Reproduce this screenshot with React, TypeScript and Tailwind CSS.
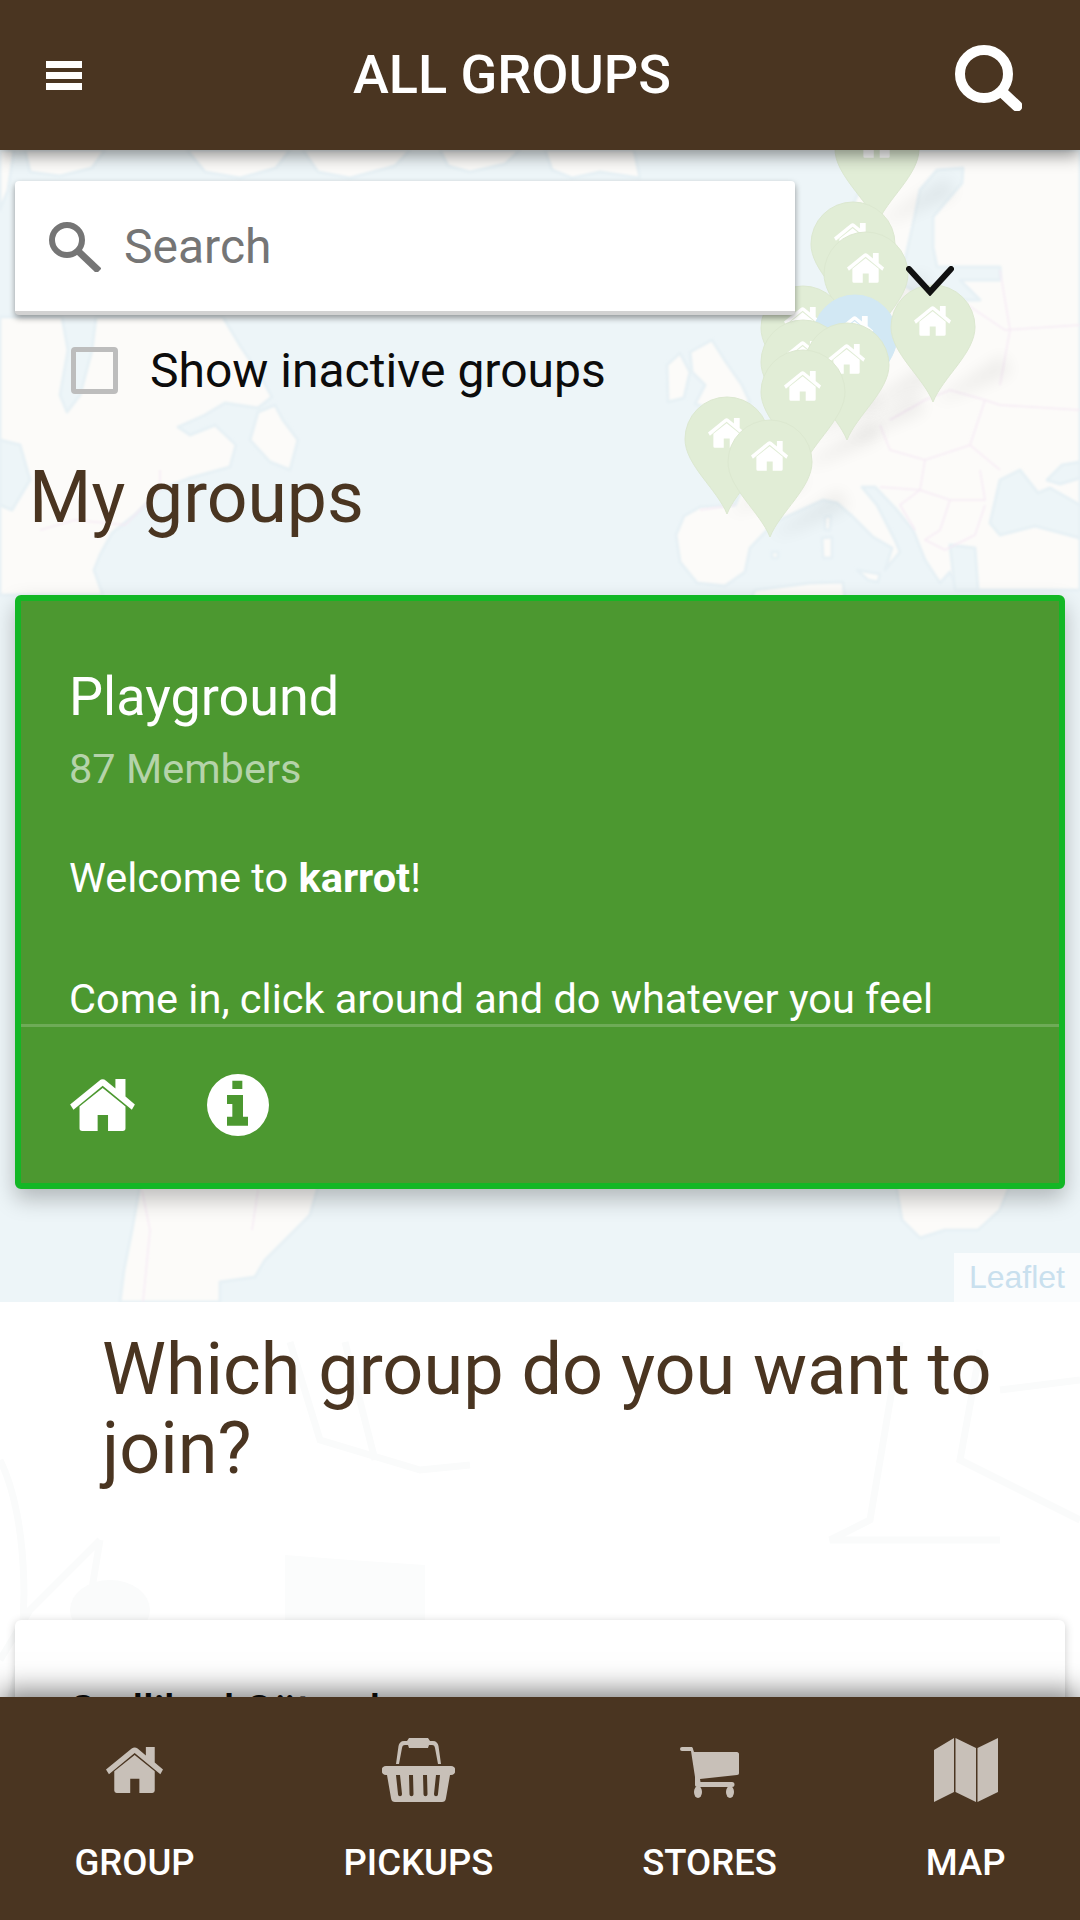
const font = "font-['Roboto',sans-serif]";

// FA4 style glyphs, drawn by hand since the icon packages only ship the newer shapes
function HomeIcon({ className }: { className?: string }) {
  return (
    <svg viewBox="0 0 193 155" className={className} fill="currentColor">
      <path d="M97 27 165 82V147a8 8 0 0 1-8 8H113V107H82V155H36a8 8 0 0 1-8-8V82Z" />
      <path d="M0 76 10 92 97 20 184 92 193 76 165 52V0H135V28L107 5Q97-3 87 5Z" />
    </svg>
  );
}

function InfoIcon({ className }: { className?: string }) {
  return (
    <svg viewBox="0 0 186 186" className={className} fill="currentColor">
      <path
        fillRule="evenodd"
        d="M93 0a93 93 0 1 0 0 186A93 93 0 1 0 93 0ZM76 20h30V45H76ZM60 63h48v65h15v27H60V128H76V90H60Z"
      />
    </svg>
  );
}

function BasketIcon({ className }: { className?: string }) {
  return (
    <svg viewBox="0 0 73 64" className={className} fill="currentColor">
      <path d="M27 0h19l2 3h3c3 0 5 2 5.500 5L59 26h-3L53 10c-.4-2-1-3-3-3h-3l-1 3H27l-1-3h-3c-2 0-2.600 1-3 3l-3 16h-3l2.500-18C17 5 19 3 22 3h3Z" />
      <path
        fillRule="evenodd"
        d="M4 28h65a4 4 0 0 1 0 9H68L64 60c-.4 3-2 4-4 4H13c-2 0-3.600-1-4-4L5 37H4a4 4 0 0 1 0-9ZM14 37l2 19c0 3 4 3 4 0L18 37ZM27 37l.5 19c0 3 4 3 4 0L31 37ZM41 37l.5 19c0 3 4 3 4 0L45 37ZM54 37l-2 19c0 3 4 3 4 0L58 37Z"
      />
    </svg>
  );
}

function CartIcon({ className }: { className?: string }) {
  return (
    <svg viewBox="0 0 59 51" className={className} fill="currentColor">
      <path d="M2 0h9c1 0 2 .5 2 2l1 3h43c1 0 2 1 2 2V26c0 1-.5 2-2 2L20 32l.5 3H52a2.500 2.500 0 0 1 0 5H17c-1 0-2-1-2-2V30L11 4H2a2 2 0 0 1 0-4Z" />
      <ellipse cx="18" cy="45" rx="4" ry="6" />
      <ellipse cx="50" cy="45" rx="4" ry="6" />
    </svg>
  );
}

function MapIcon({ className }: { className?: string }) {
  return (
    <svg viewBox="0 0 64 64" className={className} fill="currentColor">
      <path d="M20 0V54L0 64V12ZM21.500 0 42 10V64L21.500 54ZM64 0V54L43.500 64V10Z" />
    </svg>
  );
}

function Marker({ cx, top, blue }: { cx: number; top: number; blue?: boolean }) {
  return (
    <g transform={`translate(${cx - 42} ${top})`}>
      <path
        d="M42 117C32 92 0 68 0 42A42 42 0 0 1 84 42C84 68 52 92 42 117Z"
        fill={blue ? "#d2e8f4" : "#e1edd6"}
        stroke={blue ? "#d2e8f4" : "#dce8d0"}
      />
      <g transform="translate(23 21) scale(0.192)" fill="#fff">
        <path d="M97 27 165 82V147a8 8 0 0 1-8 8H113V107H82V155H36a8 8 0 0 1-8-8V82Z" />
        <path d="M0 76 10 92 97 20 184 92 193 76 165 52V0H135V28L107 5Q97-3 87 5Z" />
      </g>
    </g>
  );
}

const markers = [
  { cx: 877, top: 107 },
  { cx: 853, top: 202 },
  { cx: 866, top: 232 },
  { cx: 803, top: 286 },
  { cx: 855, top: 295, blue: true },
  { cx: 803, top: 320 },
  { cx: 847, top: 323 },
  { cx: 803, top: 350 },
  { cx: 727, top: 397 },
  { cx: 770, top: 420 },
  { cx: 933, top: 285 },
];

// the tile layer, viewBox keeps screen coordinates
function WorldMap() {
  return (
    <svg viewBox="0 150 1080 1152" className="absolute inset-0 h-full w-full">
      <defs>
        <filter id="soft" x="-50%" y="-50%" width="200%" height="200%">
          <feGaussianBlur stdDeviation="8" />
        </filter>
        <filter id="edge">
          <feGaussianBlur stdDeviation="1.2" />
        </filter>
      </defs>
      <rect x="0" y="150" width="1080" height="1152" fill="#edf5f8" />
      <g fill="#fcfbf9" stroke="#e7f1f5" strokeWidth="3" strokeLinejoin="round" filter="url(#edge)">
        {/* arctic islands along the header */}
        <path d="M0 150H14L8 190 0 210ZM25 150H105L92 168 60 176 30 172ZM187 150H290L276 168 240 178 205 172ZM303 150H410L395 166 350 178 318 172ZM440 150H520L505 164 470 172 448 166ZM545 150H634L640 178 600 172 572 178 552 170Z" />
        {/* canada and the us */}
        <path d="M0 317H62L68 350 60 395 67 412 80 395 92 350 96 317H223L241 347 260 375 272 397 258 408 225 403 205 415 178 427 190 435 215 425 236 445 230 467 190 478 160 490 135 515 112 533 100 555 94 570 103 595H0Z" />
        <path d="M258 412 275 405 283 420 298 440 290 470 270 462 250 440Z" />
        {/* uk and ireland */}
        <path d="M690 352 712 340 726 362 742 385 750 402 720 412 695 404 705 385 692 372Z" />
        <path d="M667 365 680 353 690 372 684 398 668 402Z" />
        {/* eurasia */}
        <path d="M684 516 700 507 735 505 750 470 760 440 790 420 830 400 860 350 870 300 845 250 855 200 880 150H1080V590H975L960 590 950 572 940 583 925 560 913 530 895 508 875 487 862 487 877 505 895 540 900 552 885 570 892 548 873 537 853 517 837 503 823 500 775 522 750 548 745 572 725 586 697 583 680 562 676 535Z" />
        {/* south america and africa, under the card */}
        <path d="M141 1180H320L310 1215 290 1235 265 1260 255 1277 220 1282V1302H120L124 1270 132 1230Z" />
        <path d="M895 1180H1012L1000 1210 978 1230 945 1230 920 1238 902 1220Z" />
        {/* mediterranean islands and the north african coast */}
        <path d="M825 517 831 516 830 530 825 530ZM822 538 832 537 832 558 823 558ZM857 570 880 574 878 582 868 580ZM772 552 778 552 778 558 772 558Z" />
        <path d="M750 600 755 590 810 583 843 582 845 600Z" />
      </g>
      <g fill="#edf5f8" stroke="#e7f1f5" strokeWidth="3" strokeLinejoin="round" filter="url(#edge)">
        {/* baltic */}
        <path d="M900 283 915 215 920 190 937 170 963 168 962 183 933 217 933 247 937 267 1000 267 1000 280 960 280 980 300 930 300Z" />
        {/* black sea */}
        <path d="M990 523 1000 480 1020 470 1038 493 1050 488 1080 505V538L1035 526 1000 535Z" />
        <path d="M1047 480 1062 465 1080 462V478L1060 484Z" />
        {/* aegean */}
        <path d="M950 545 975 548 978 590 955 590Z" />
        {/* great lakes */}
        <path d="M0 440 20 445 30 480 12 510 0 505Z" />
      </g>
      <g fill="none" stroke="#f6ebf5" strokeWidth="1.500" filter="url(#edge)">
        <path d="M880 425 890 450 925 460 970 445 1000 470M970 445 985 400 1000 405 1080 410M985 400 950 390 925 400 890 420M925 460 920 490 880 487M920 490 950 500 985 500 980 470M920 490 900 505 915 530M950 500 940 530 925 540 945 550 975 535 985 505" />
        <path d="M1000 270 1010 330 1000 385M960 300 1005 330 1080 325" />
        <path d="M40 530 75 520 125 525 160 490 160 470M700 510 735 505" />
        <path d="M142 1190 150 1230 143 1302M258 1190 252 1230" />
      </g>
      {markers.map((m) => (
        <path
          key={`s${m.cx}-${m.top}`}
          d={`M${m.cx} ${m.top + 117}L${m.cx + 70} ${m.top + 70} ${m.cx + 78} ${m.top + 88} ${m.cx + 20} ${m.top + 112}Z`}
          fill="#000"
          opacity="0.06"
          filter="url(#soft)"
        />
      ))}
      {markers.map((m) => (
        <Marker key={`${m.cx}-${m.top}`} {...m} />
      ))}
    </svg>
  );
}

// faint hand drawn people behind the join list
function Doodles() {
  return (
    <svg viewBox="0 1302 1080 420" className="absolute inset-0 h-full w-full" fill="none" stroke="#fafbfb" strokeWidth="7">
      <path d="M290 1302 320 1400 420 1430 470 1425M345 1302 375 1420M900 1302 870 1480 830 1500H1000M980 1310 960 1420 1080 1480M1080 1340 1000 1350" />
      <path d="M100 1500 30 1570 0 1620M100 1500 90 1560" />
      <ellipse cx="110" cy="1570" rx="40" ry="30" fill="#fafbfb" stroke="none" />
      <path d="M285 1515 350 1520 425 1525V1620H285Z" fill="#fbfcfc" stroke="none" />
      <path d="M0 1420C30 1480 30 1600 10 1660" />
    </svg>
  );
}

const tabs = [
  { label: "GROUP", icon: <HomeIcon className="mt-[9px] h-[46px] w-[57px]" /> },
  { label: "PICKUPS", icon: <BasketIcon className="h-[64px] w-[73px]" /> },
  { label: "STORES", icon: <CartIcon className="mt-[9px] h-[51px] w-[59px]" /> },
  { label: "MAP", icon: <MapIcon className="h-[64px] w-[64px]" /> },
];

export default function App() {
  return (
    <div className={`${font} flex h-[1920px] w-[1080px] flex-col overflow-hidden bg-white`}>
      {/* 헤더 */}
      <header className="relative z-20 flex h-[150px] shrink-0 items-center bg-[#4a3521] text-white shadow-[0_5px_16px_rgba(0,0,0,0.45)]">
        <div className="ml-[46px] flex w-[36px] flex-col gap-[4px]">
          <span className="h-[7px] bg-white" />
          <span className="h-[7px] bg-white" />
          <span className="h-[7px] bg-white" />
        </div>
        <h1 className="ml-[271px] text-[54px] leading-none font-medium">ALL GROUPS</h1>
        <svg viewBox="0 0 67 66" className="absolute top-[45px] left-[955px] h-[66px] w-[67px]" fill="none" stroke="currentColor">
          <circle cx="29" cy="29" r="24" strokeWidth="10" />
          <path d="M47 47 62 61" strokeWidth="11" strokeLinecap="round" />
        </svg>
      </header>

      <main className="min-h-0 flex-1 overflow-hidden">
        {/* 지도 */}
        <section className="relative h-[1152px]">
          <WorldMap />
          <div className="relative flex px-[15px] pt-[31px]">
            <div className="flex h-[134px] w-[780px] items-center rounded-[4px] border-b-[4px] border-[#d2d2d2] bg-white pt-[2px] shadow-[0_3px_6px_rgba(0,0,0,0.4)]">
              <svg viewBox="0 0 52 50" className="ml-[34px] h-[50px] w-[52px]" fill="none" stroke="#757575">
                <circle cx="18" cy="18" r="15" strokeWidth="6" />
                <path d="M29 29 50 49" strokeWidth="7" />
              </svg>
              <span className="ml-[23px] text-[48px] text-[#757575]">Search</span>
            </div>
            <svg viewBox="0 0 48 30" className="mt-[85px] ml-[111px] h-[30px] w-[48px]" fill="none" stroke="#111" strokeWidth="6" strokeLinecap="round">
              <path d="M3 3 24 26 45 3" />
            </svg>
          </div>
          <label className="relative mt-[32px] flex items-center pl-[71px]">
            <span className="h-[47px] w-[47px] rounded-[4px] border-[5px] border-[#bdbdbd]" />
            <span className="ml-[32px] text-[48px] leading-[47px] text-[#0c0c0c]">Show inactive groups</span>
          </label>
          <h2 className="relative mt-[62px] ml-[29px] text-[71.500px] leading-[84px] text-[#4a3521]">My groups</h2>

          <article className="relative mx-[15px] mt-[55px] flex h-[594px] flex-col overflow-hidden rounded-[6px] border-[6px] border-[#13b725] bg-[#4c9830] text-white shadow-[0_10px_22px_rgba(0,0,0,0.25)]">
            <div className="h-[427px] overflow-hidden pt-[64px] pr-[49px] pl-[48px]">
              <h3 className="text-[54px] leading-[64px]">Playground</h3>
              <p className="mt-[15px] text-[41.500px] leading-[50px] text-[#b5d3aa]">87 Members</p>
              <p className="mt-[59px] text-[41.500px] leading-[50px]">
                Welcome to <b>karrot</b>!
              </p>
              <p className="mt-[71px] text-[41.500px] leading-[50px] whitespace-nowrap">
                Come in, click around and do whatever you feel
              </p>
            </div>
            <div className="flex h-[161px] items-center border-t-[3px] border-[#6eab57] pl-[49px]">
              <HomeIcon className="h-[52px] w-[65px]" />
              <InfoIcon className="ml-[72px] h-[62px] w-[62px]" />
            </div>
          </article>

          <div className="absolute right-0 bottom-0 bg-white/70 px-[15px] font-['Liberation_Sans',sans-serif] text-[32px] leading-[49px] text-[#c9e0ee]">
            Leaflet
          </div>
        </section>

        {/* 참여할 그룹 */}
        <section className="relative h-[500px] overflow-hidden">
          <Doodles />
          <h2 className="relative pt-[28px] pr-[80px] pl-[102px] text-[72px] leading-[79px] text-[#4a3521]">
            Which group do you want to join?
          </h2>
          <div className="relative mx-[15px] mt-[132px] h-[300px] rounded-[6px] bg-white px-[55px] pt-[66px] shadow-[0_2px_10px_rgba(0,0,0,0.2)]">
            <p className="text-[42px] leading-[50px] font-medium text-[#0c0c0c]">Sodlibed Gütersl</p>
          </div>
        </section>
      </main>

      {/* 하단 탭 */}
      <nav className="relative z-20 flex h-[223px] shrink-0 bg-[#4a3521] shadow-[0_-6px_26px_rgba(0,0,0,0.5)]">
        {tabs.map((tab) => (
          <div key={tab.label} className="flex flex-auto flex-col items-center">
            <div className="mt-[41px] flex h-[64px] items-start text-[#c8c0b8]">{tab.icon}</div>
            <span className="mt-[40px] text-[36.500px] leading-[42px] font-medium text-white">{tab.label}</span>
          </div>
        ))}
      </nav>
    </div>
  );
}
